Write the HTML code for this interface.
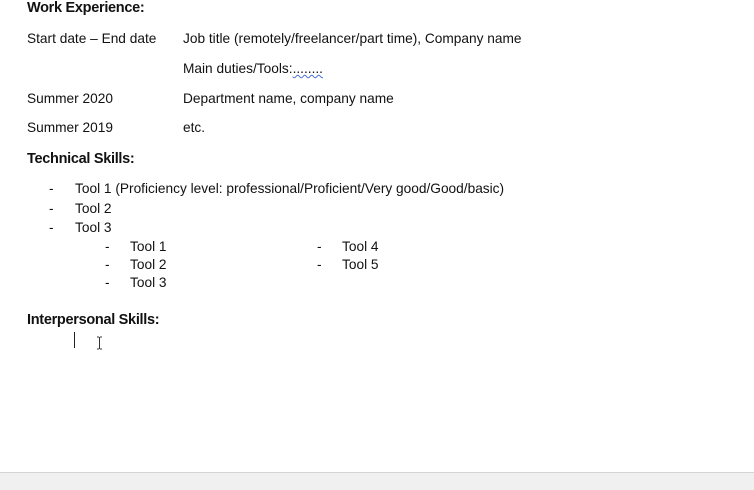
<!DOCTYPE html>
<html><head><style>
body{margin:0;width:754px;height:489px;background:#fff;position:relative;overflow:hidden;font-family:"Liberation Sans",sans-serif;font-size:13.7px;color:#111}
.t{position:absolute;white-space:nowrap;line-height:16px}
.b{font-weight:bold;font-size:14.5px;letter-spacing:-0.3px}
.foot{position:absolute;left:0;top:472px;width:754px;height:17px;background:#f0f0f0;border-top:1px solid #d4d4d4}
</style></head><body>
<div class="t b" style="left:27px;top:0px">Work Experience:</div>
<div class="t" style="left:27px;top:31px">Start date – End date</div>
<div class="t" style="left:183px;top:31px">Job title (remotely/freelancer/part time), Company name</div>
<div class="t" style="left:183px;top:61px">Main duties/Tools:<span style="text-decoration:underline wavy #4a6fd0;text-decoration-thickness:1px">........</span></div>
<div class="t" style="left:27px;top:91px">Summer 2020</div>
<div class="t" style="left:183px;top:91px">Department name, company name</div>
<div class="t" style="left:27px;top:120px">Summer 2019</div>
<div class="t" style="left:183px;top:120px">etc.</div>
<div class="t b" style="left:27px;top:151px">Technical Skills:</div>
<div class="t" style="left:49px;top:181px">-</div><div class="t" style="left:75px;top:181px">Tool 1 (Proficiency level: professional/Proficient/Very good/Good/basic)</div>
<div class="t" style="left:49px;top:201px">-</div><div class="t" style="left:75px;top:201px">Tool 2</div>
<div class="t" style="left:49px;top:220px">-</div><div class="t" style="left:75px;top:220px">Tool 3</div>
<div class="t" style="left:105px;top:239px">-</div><div class="t" style="left:130px;top:239px">Tool 1</div>
<div class="t" style="left:105px;top:257px">-</div><div class="t" style="left:130px;top:257px">Tool 2</div>
<div class="t" style="left:105px;top:275px">-</div><div class="t" style="left:130px;top:275px">Tool 3</div>
<div class="t" style="left:317px;top:239px">-</div><div class="t" style="left:342px;top:239px">Tool 4</div>
<div class="t" style="left:317px;top:257px">-</div><div class="t" style="left:342px;top:257px">Tool 5</div>
<div class="t b" style="left:27px;top:312px">Interpersonal Skills:</div>
<div style="position:absolute;left:74px;top:332px;width:1px;height:16px;background:#222"></div>
<svg style="position:absolute;left:96px;top:336px" width="7" height="14"><path d="M1 1h2M4 1h2M3.5 1v12M1 13h2M4 13h2" stroke="#333" fill="none" stroke-width="1"/></svg>
<div class="foot"></div>
</body></html>
